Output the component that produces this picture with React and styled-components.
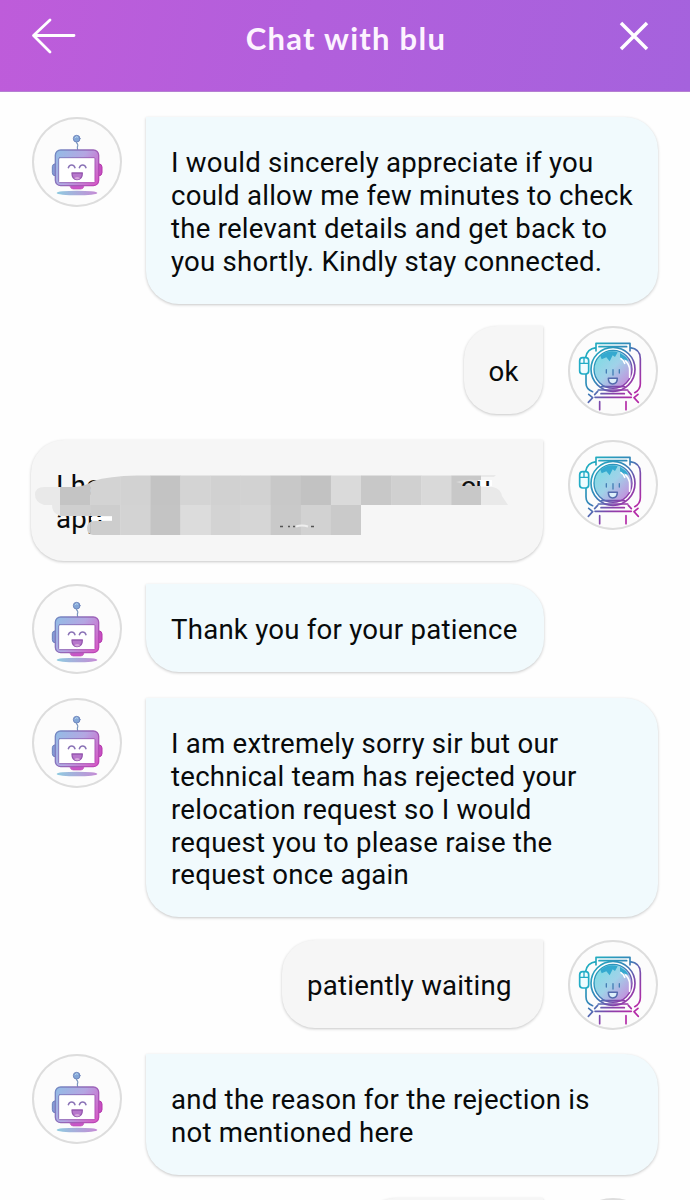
import React from 'react';
import styled, { createGlobalStyle } from 'styled-components';

const GlobalStyle = createGlobalStyle`
  * { box-sizing: border-box; }
  body { margin: 0; background: #fefefe; font-family: Roboto, "Liberation Sans", sans-serif; }
`;

const Screen = styled.div`
  width: 690px;
  height: 1200px;
  overflow: hidden;
  background: #fefefe;
`;

const Header = styled.header`
  height: 92px;
  padding: 0 40px 20px 31px;
  display: flex;
  align-items: center;
  justify-content: space-between;
  background: linear-gradient(100deg, #be5cda 0%, #b25fdc 45%, #a562dd 100%);
  border-bottom: 1px solid #b57fd2;
`;

const Title = styled.h1`
  margin: 0;
  padding: 4px 3px 0 0;
  font: 700 31px/36px Lato, "Open Sans", sans-serif;
  letter-spacing: 1.25px;
  color: #fdf3ff;
`;

const Messages = styled.main`
  padding: 25px 32px 0;
  display: flex;
  flex-direction: column;
  gap: 22.9px;
`;

const Row = styled.div`
  display: flex;
  align-items: flex-start;
  gap: ${(p) => (p.$mine ? 25 : 24)}px;
  min-height: 91px;
  flex-direction: ${(p) => (p.$mine ? 'row-reverse' : 'row')};
`;

const Avatar = styled.div`
  flex: none;
  width: 90px;
  height: 90px;
  border-radius: 50%;
  background: #fcfcfc;
  box-shadow: inset 0 0 0 2px #dddddd;
  svg { display: block; }
`;

const Bubble = styled.div`
  position: relative;
  flex: none;
  width: ${(p) => p.$width}px;
  padding: 30px 0 25.2px 25px;
  border-radius: ${(p) => (p.$mine ? '33px 0 33px 33px' : '0 33px 33px 33px')};
  background: ${(p) => (p.$mine ? '#f6f6f6' : '#f1fafd')};
  box-shadow: 0 1px 3px rgba(0, 0, 0, 0.22);
  color: #080a0b;
  font-size: 27.6px;
  line-height: 32.85px;
  letter-spacing: 0.24px;
  white-space: nowrap;
`;

const Line = styled.div`
  height: 32.85px;
`;

const Mosaic = styled.svg`
  position: absolute;
  left: 0;
  top: 0;
`;

const Robot = () => (
  <svg width="90" height="90" viewBox="21 21 270 270" fill="none" strokeLinecap="round" strokeLinejoin="round">
    <defs>
      <linearGradient id="robot" gradientUnits="userSpaceOnUse" x1="85" y1="120" x2="225" y2="215">
        <stop offset="0" stopColor="#8fbfe6" />
        <stop offset=".5" stopColor="#b4a6e2" />
        <stop offset="1" stopColor="#d855c4" />
      </linearGradient>
      <linearGradient id="robotLine" gradientUnits="userSpaceOnUse" x1="85" y1="120" x2="225" y2="220">
        <stop offset="0" stopColor="#6f8dc4" />
        <stop offset=".5" stopColor="#9468b8" />
        <stop offset="1" stopColor="#c043b6" />
      </linearGradient>
      <linearGradient id="ground" x1="0" x2="1">
        <stop offset="0" stopColor="#8ecbe0" />
        <stop offset="1" stopColor="#c58bd5" />
      </linearGradient>
    </defs>
    <ellipse cx="156" cy="249" rx="61" ry="7" fill="url(#ground)" />
    <path d="M91 161q-9 1-9 9v18q0 9 9 10z" fill="#859bd5" stroke="#6b80bd" strokeWidth="3" />
    <path d="M221 161q10 1 10 10v17q0 9-10 10z" fill="#c64fc2" stroke="#b438ab" strokeWidth="3" />
    <path d="M136 226h40v5q-2 6-9 6h-22q-7 0-9-6z" fill="#c956c7" stroke="#bc4bb7" strokeWidth="2" />
    <path d="M154 97q7 7 3 14l1 11" stroke="#7994bd" strokeWidth="3.5" />
    <circle cx="155" cy="86" r="10" fill="#83a6d7" stroke="#7288bd" strokeWidth="3" />
    <path d="M150 83q3-5 8-2" stroke="#b9d8f0" strokeWidth="3" />
    <rect x="91" y="120" width="130" height="107" rx="16" fill="url(#robot)" stroke="url(#robotLine)" strokeWidth="4" />
    <rect x="101" y="143" width="109" height="75" rx="3" fill="#fff" stroke="url(#robotLine)" strokeWidth="3" />
    <path d="M130 173q3-8 10-8t10 8M163 173q3-8 10-8t10 8" stroke="#8a73b6" strokeWidth="4.5" />
    <path d="M141 189h31q0 20-16 20-15 0-15-20z" fill="#b877cc" stroke="#9558af" strokeWidth="4" />
    <path d="M148 205q9-8 17 0-8 7-17 0z" fill="#d6a7dc" />
  </svg>
);

const Astronaut = () => (
  <svg width="90" height="90" viewBox="24 21 270 270" fill="none" strokeLinecap="round" strokeLinejoin="round">
    <defs>
      <linearGradient id="suit" gradientUnits="userSpaceOnUse" x1="90" y1="90" x2="230" y2="220">
        <stop offset="0" stopColor="#22adc0" />
        <stop offset=".42" stopColor="#3486b8" />
        <stop offset=".72" stopColor="#8245ab" />
        <stop offset="1" stopColor="#b42aa7" />
      </linearGradient>
      <linearGradient id="visor" gradientUnits="userSpaceOnUse" x1="110" y1="110" x2="205" y2="205">
        <stop offset="0" stopColor="#7edce4" />
        <stop offset=".45" stopColor="#a0d2e9" />
        <stop offset="1" stopColor="#c985da" />
      </linearGradient>
    </defs>
    <g stroke="url(#suit)" strokeWidth="5">
      <path d="M108 96V73h102v23M117 83h83M108 86q-27 4-31 29M210 86q31 4 31 33v75q0 18-17 27M78 165v27q0 19 20 26" />
      <circle cx="159" cy="151" r="66" fill="#fff" />
      <circle cx="159" cy="151" r="57" fill="url(#visor)" strokeWidth="4" />
      <path d="M124 203h70M115 213h88M123 224h70M105 235h109M113 217l-9 10M205 217l9 10M86 226l12 10-13 14M234 226l-12 10 13 14" />
      <path d="M119 248v24M198 248v24" />
    </g>
    <rect x="59" y="116" width="27" height="49" rx="9" fill="#effcff" stroke="#22acc6" strokeWidth="5" />
    <path d="M60 133h25M72 117v16" stroke="#22acc6" strokeWidth="4" />
    <path d="M121 110l14-9q22-8 38-1l-8 14-7-5-9 18-10-12-14 6-4-11zM180 102l18 12 8 12-14-5-4 6-8-14z" fill="#35a9cf" />
    <path d="M183 119q8 5 11 14M197 126q12 12 12 27v22" stroke="#fff" strokeWidth="5" />
    <path d="M139 152v10M159 152v16M178 152v10" stroke="#457eb4" strokeWidth="4" />
    <path d="M145 178h27q0 17-14 17-13 0-13-17z" fill="#dceffa" stroke="#546bad" strokeWidth="4.5" />
  </svg>
);

const topTones = ['#c4c4c4', '#d3d3d3', '#d2d2d2', '#c3c3c3', '#d4d4d4', '#d1d1d1', '#d2d2d2', '#c8c8c8', '#c2c2c2', '#dadada', '#c8c8c8', '#d0d0d0', '#d9d9d9', '#c8c8c8'];
const bottomTones = ['#cfcfcf', '#cdcdcd', '#d3d3d3', '#c4c4c4', '#dcdcdc', '#d3d3d3', '#d6d6d6', '#c9c9c9', '#d2d2d2', '#cacaca'];

const Redaction = () => (
  <Mosaic width="513" height="122" viewBox="31 440 513 122">
    <defs>
      <clipPath id="smear">
        <path d="M44 487H75Q86 486 93 481Q109 476 137 475.5H481V505H361V535H93Q87 534 87 528Q87 521 95 521H112V516H60Q52 513 52 505H44Q35 502 35 495Q35 487 44 487Z" />
      </clipPath>
      <clipPath id="slice"><rect x="462" y="480" width="32" height="6" /></clipPath>
    </defs>
    <g clipPath="url(#smear)">
      <rect x="31" y="470" width="29" height="70" fill="#e9e9e9" />
      {topTones.map((c, i) => <rect key={i} x={60 + i * 30.1} y="475" width="30.4" height="30" fill={c} />)}
      {bottomTones.map((c, i) => <rect key={i} x={60 + i * 30.1} y="505" width="30.4" height="30" fill={c} />)}
    </g>
    <path d="M91 517h21v3h-21z" fill="#fff" />
    <path d="M456 482q13-4 24-1v5q-12 0-24-4z" fill="#d9d9d9" />
    <path d="M481 475h15l-2 2h-13zM481 487h12q8 2 9 9l6 9h-27z" fill="#e9e9e9" />
    <path d="M478 480h14v6h-14z" fill="#fff" />
    <text x="449" y="496" fontSize="27.6" fill="#111" clipPath="url(#slice)" letterSpacing="-1">you</text>
    <path d="M280 526.5h3M288 526.5h2M293 526.5h2M311 526.5h3" stroke="#555" strokeWidth="1.4" />
    <path d="M296 526.5q6-2 12 0" stroke="#eee" strokeWidth="2" fill="none" />
  </Mosaic>
);

const messages = [
  { width: 512, lines: ['I would sincerely appreciate if you', 'could allow me few minutes to check', 'the relevant details and get back to', 'you shortly. Kindly stay connected.'] },
  { mine: true, width: 79.5, lines: ['ok'] },
  { mine: true, width: 512, lines: ['I ha', 'app'], redacted: true },
  { width: 397.5, lines: ['Thank you for your patience'] },
  { width: 512, lines: ['I am extremely sorry sir but our', 'technical team has rejected your', 'relocation request so I would', 'request you to please raise the', 'request once again'] },
  { mine: true, width: 261, lines: ['patiently waiting'] },
  { width: 512, lines: ['and the reason for the rejection is', 'not mentioned here'] },
  { mine: true, width: 180, lines: [''] },
];

export default function App() {
  return (
    <>
      <GlobalStyle />
      <Screen>
        <Header>
          <svg width="46" height="36" viewBox="0 0 46 36" fill="none" stroke="#fff" strokeWidth="2.8" strokeLinecap="round" strokeLinejoin="round">
            <path d="M19 2L2.5 17.5L19 34M3 17.5h40" />
          </svg>
          <Title>Chat with blu</Title>
          <svg width="32" height="32" viewBox="0 0 32 32" fill="none" stroke="#fff" strokeWidth="3.5">
            <path d="M3 3L29 29M29 3L3 29" />
          </svg>
        </Header>
        <Messages>
          {messages.map((m, i) => (
            <Row key={i} $mine={m.mine}>
              <Avatar>{m.mine ? <Astronaut /> : <Robot />}</Avatar>
              <Bubble $mine={m.mine} $width={m.width}>
                {m.lines.map((text, n) => <Line key={n}>{text}</Line>)}
                {m.redacted && <Redaction />}
              </Bubble>
            </Row>
          ))}
        </Messages>
      </Screen>
    </>
  );
}
